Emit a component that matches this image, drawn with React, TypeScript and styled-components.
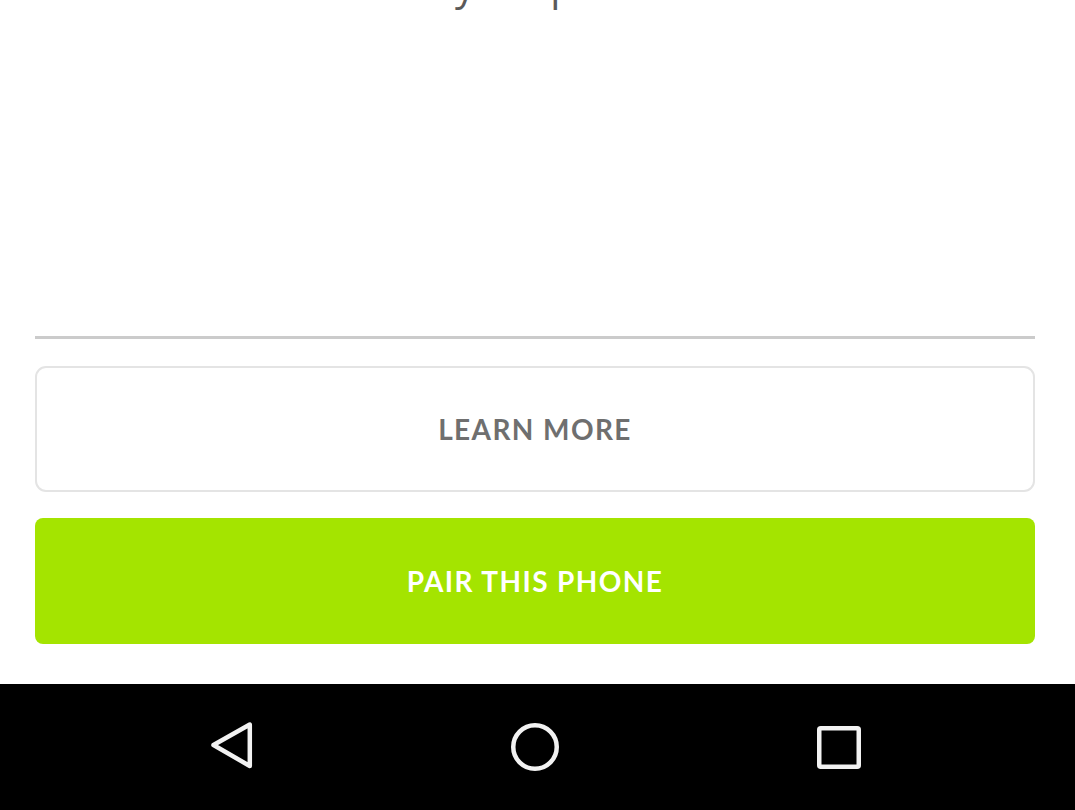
import React from "react";
import styled, { createGlobalStyle } from "styled-components";

const Global = createGlobalStyle`
  html, body { margin: 0; padding: 0; background: #ffffff; }
  body { font-family: "Open Sans", "Liberation Sans", sans-serif; overflow: hidden; }
`;

const Screen = styled.div`
  width: 1075px;
  height: 810px;
  display: flex;
  flex-direction: column;
  background: #ffffff;
  overflow: hidden;
`;

const Content = styled.main`
  flex: 1;
  display: flex;
  flex-direction: column;
  padding: 0 40px 40px 35px;
`;

const Headline = styled.p`
  flex: 1;
  margin: -38px 0 0;
  font-family: "Open Sans", "Liberation Sans", sans-serif;
  font-size: 40px;
  line-height: 46px;
  color: #5a5a5a;
  text-align: center;
  padding-left: 7px;
`;

const Divider = styled.hr`
  margin: 0 0 27px;
  border: none;
  height: 3px;
  background: #cbcbcb;
`;

const Button = styled.button<{ $primary?: boolean }>`
  height: 126px;
  width: 100%;
  box-sizing: border-box;
  display: flex;
  align-items: center;
  justify-content: center;
  border-radius: ${(p) => (p.$primary ? "8px" : "11px")};
  border: ${(p) => (p.$primary ? "none" : "2.5px solid #e4e4e4")};
  background: ${(p) => (p.$primary ? "#a4e400" : "#ffffff")};
  color: ${(p) => (p.$primary ? "#ffffff" : "#6f6f6f")};
  font-family: "Lato", "Open Sans", sans-serif;
  font-weight: 700;
  font-size: 28px;
  letter-spacing: 1.4px;
  padding: 0;
  & + & { margin-top: 26px; }
`;

const NavBar = styled.nav`
  height: 126px;
  background: #000000;
  display: flex;
  align-items: center;
  justify-content: center;
  gap: 243px;
  padding-right: 5px;
`;

const NavIcon = styled.svg`
  width: 60px;
  height: 60px;
  display: block;
`;

export default function App() {
  return (
    <Screen>
      <Global />
      <Content>
        <Headline>your pet.</Headline>
        <Divider />
        <Button type="button">LEARN MORE</Button>
        <Button type="button" $primary>
          PAIR THIS PHONE
        </Button>
      </Content>
      <NavBar>
        <NavIcon viewBox="0 0 60 60" fill="none" stroke="#f2f2f2" strokeWidth="4.5" strokeLinejoin="round" strokeLinecap="round">
          <path d="M11.5 28 L47.8 7.5 L47.8 49 Z" />
        </NavIcon>
        <NavIcon viewBox="0 0 60 60" fill="none" stroke="#f2f2f2" strokeWidth="4.5">
          <circle cx="30" cy="30" r="21.75" />
        </NavIcon>
        <NavIcon viewBox="0 0 60 60" fill="none" stroke="#f2f2f2" strokeWidth="4.5" strokeLinejoin="round">
          <rect x="11.25" y="11.25" width="39.5" height="38.5" rx="1.5" />
        </NavIcon>
      </NavBar>
    </Screen>
  );
}
